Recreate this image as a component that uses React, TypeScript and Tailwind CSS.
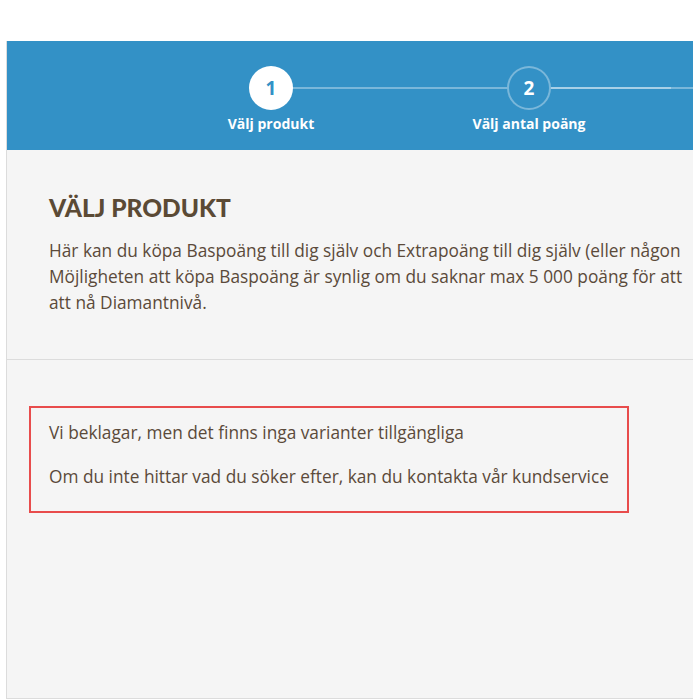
import React from "react";

const steps = [
  { n: 1, label: "Välj produkt", active: true },
  { n: 2, label: "Välj antal poäng", active: false },
];

export default function App() {
  return (
    <div className="w-[693px] h-[700px] overflow-hidden bg-white" style={{ fontFamily: "'Open Sans', Lato, sans-serif" }}>
      <div className="pt-[41px] pl-[6px]">
        <div className="w-[1100px] h-[658px] border-l border-b border-[#dcdcdc] bg-[#f5f5f5] flex flex-col">
          <div className="h-[109px] bg-[#3391c6] pt-[25px] pl-[135px] flex">
            {steps.map((s) => (
              <div key={s.n} className="relative w-[258px] flex flex-col items-center">
                <div className="absolute left-1/2 top-[21px] w-[400px] h-[2px] bg-white/35" />
                {s.active ? (
                  <div className="relative z-10 w-[44px] h-[44px] rounded-full bg-white flex items-center justify-center text-[#3391c6] text-[19px] font-bold">
                    {s.n}
                  </div>
                ) : (
                  <div className="relative z-10 w-[44px] h-[44px] rounded-full bg-[#3391c6] border-2 border-white/35 flex items-center justify-center text-white text-[19px] font-bold">
                    {s.n}
                  </div>
                )}
                <div className="mt-[4px] text-white text-[14px] font-bold leading-[20px] whitespace-nowrap">{s.label}</div>
              </div>
            ))}
          </div>
          <div className="pl-[42px] pt-[43px] pb-[43px] border-b border-[#dcdcdc]">
            <h1 className="text-[24.5px] leading-[30px] font-black text-[#5b4a35]" style={{ fontFamily: "Lato, sans-serif" }}>VÄLJ PRODUKT</h1>
            <p className="mt-[15px] w-[900px] text-[17.3px] leading-[26px] text-[#5b4a3a] whitespace-nowrap">
              Här kan du köpa Baspoäng till dig själv och Extrapoäng till dig själv (eller någon<br />
              Möjligheten att köpa Baspoäng är synlig om du saknar max 5 000 poäng för att<br />
              att nå Diamantnivå.
            </p>
          </div>
          <div className="pl-[22px] pt-[46px]">
            <div className="w-[600px] h-[107px] border-2 border-[#e84c4c] pl-[18px] pt-[12px] text-[17.3px] leading-[26px] text-[#5b4a3a]">
              <p>Vi beklagar, men det finns inga varianter tillgängliga</p>
              <p className="mt-[18px]">Om du inte hittar vad du söker efter, kan du kontakta vår kundservice</p>
            </div>
          </div>
        </div>
      </div>
    </div>
  );
}
